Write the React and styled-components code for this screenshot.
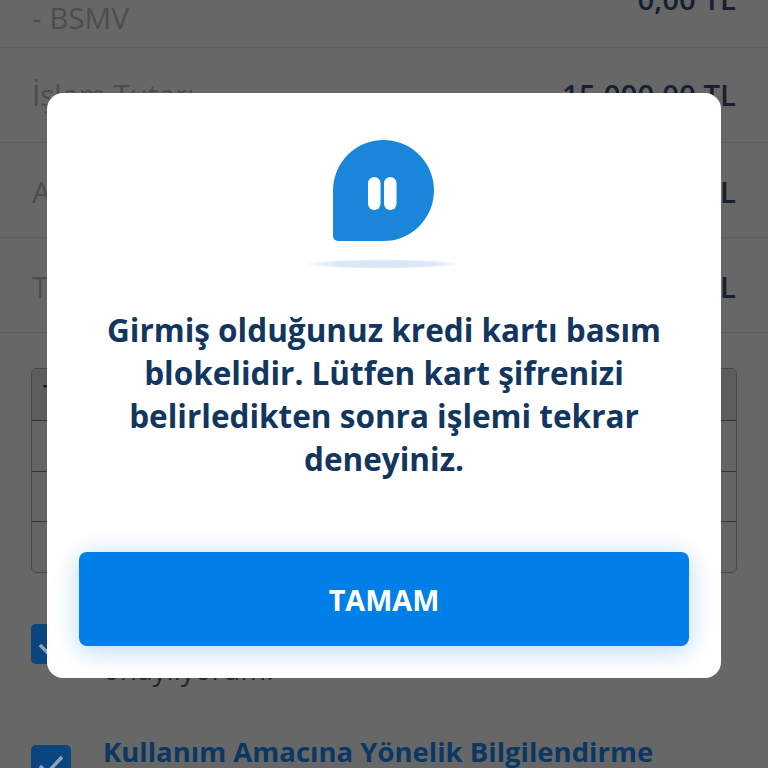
import React from "react";
import styled, { createGlobalStyle } from "styled-components";

const GlobalStyle = createGlobalStyle`
  html, body {
    margin: 0;
    padding: 0;
    background: #676767;
    font-family: "Open Sans", "Noto Sans", sans-serif;
  }
`;

// the page behind the dialog is already in its dimmed colours
const Page = styled.div`
  position: relative;
  width: 768px;
  height: 768px;
  overflow: hidden;
  background: #676767;
`;

const Summary = styled.div`
  margin-top: -47px;
`;

const Row = styled.div`
  box-sizing: border-box;
  height: 95px;
  padding: ${(p) => p.$pad}px 32px 0;
  border-bottom: 1px solid #5e5e5e;
  display: flex;
  justify-content: space-between;
  align-items: flex-start;
`;

const Label = styled.span`
  font-size: 29.6px;
  line-height: 38px;
  color: #4a4e53;
  padding-top: ${(p) => (p.$indent ? "19px" : "0")};
`;

const Value = styled.span`
  font-size: 29.4px;
  font-weight: 600;
  line-height: 38px;
  color: #181f30;
`;

const Table = styled.div`
  margin: 35px 31px 0;
  height: 205px;
  box-sizing: border-box;
  border: 1px solid #474747;
  border-radius: 6px;
  display: grid;
  grid-template-rows: repeat(4, 1fr);
  overflow: hidden;
`;

const TableRow = styled.div`
  background: ${(p) => (p.$head ? "#5d5d5d" : "#646464")};
  border-top: ${(p) => (p.$head ? "0" : "1px solid #363636")};
  padding: 6px 0 0 11px;
  font-size: 26px;
  font-weight: 600;
  line-height: 36px;
  color: #1a1a1a;
`;

const Consents = styled.div`
  margin: 51px 31px 0;
  display: flex;
  flex-direction: column;
  gap: 59px;
`;

const Consent = styled.div`
  display: flex;
  gap: 32px;
  align-items: flex-start;
`;

const Check = styled.span`
  flex: none;
  width: 40px;
  height: 40px;
  border-radius: 5px;
  background: #0a4580;
  display: flex;
  align-items: center;
  justify-content: center;
`;

const ConsentText = styled.span`
  font-size: 28px;
  line-height: 34px;
  color: #23282f;
  padding-top: 28px;
`;

const ConsentTitle = styled.span`
  margin-top: -6px;
  font-size: 27.5px;
  font-weight: 700;
  line-height: 26px;
  color: #0b3763;
  white-space: nowrap;
`;

const DialogLayer = styled.div`
  position: absolute;
  inset: 0;
  display: flex;
  justify-content: center;
  align-items: flex-start;
  padding-top: 93px;
  box-sizing: border-box;
`;

const Modal = styled.div`
  width: 674px;
  height: 585px;
  box-sizing: border-box;
  background: #fff;
  border-radius: 16px;
  padding: 47px 32px 32px;
  display: flex;
  flex-direction: column;
  align-items: center;
`;

const IconWrap = styled.div`
  width: 101px;
  height: 101px;
  margin-right: 1px;
`;

const Shadow = styled.div`
  width: 160px;
  height: 10px;
  margin: 18px 2px 0 0;
  border-radius: 50%;
  background: radial-gradient(ellipse closest-side, #d6e7f6 0%, #d9e8f6 62%, rgba(226, 238, 249, 0) 100%);
`;

const Message = styled.p`
  margin: 39px -8px 0;
  align-self: stretch;
  font-size: 31.5px;
  font-weight: 700;
  line-height: 43px;
  text-align: center;
  color: #12365e;
`;

const OkButton = styled.button`
  margin-top: auto;
  width: 100%;
  height: 94px;
  border: 0;
  border-radius: 8px;
  background: #007fe8;
  box-shadow: 0 4px 26px rgba(0, 127, 232, 0.3);
  color: #fff;
  font-family: inherit;
  font-size: 28.8px;
  font-weight: 700;
`;

const Tick = () => (
  <svg width="26" height="22" viewBox="0 0 26 22" fill="none">
    <path d="M2 12l7 7L24 3" stroke="#8fa3b8" strokeWidth="3.5" />
  </svg>
);

const PauseIcon = () => (
  <svg width="101" height="101" viewBox="0 0 101 101">
    <path
      d="M50.5 0a50.5 50.5 0 0 1 0 101H5a5 5 0 0 1-5-5V50.5A50.5 50.5 0 0 1 50.5 0z"
      fill="#1a86d9"
    />
    <rect x="35" y="37" width="12.5" height="33" rx="6.25" fill="#fff" />
    <rect x="51" y="37" width="12.5" height="33" rx="6.25" fill="#fff" />
  </svg>
);

export default function App() {
  return (
    <>
      <GlobalStyle />
      <Page>
        <Summary>
          <Row $pad={27}>
            <Label $indent>- BSMV</Label>
            <Value>0,00 TL</Value>
          </Row>
          <Row $pad={28}>
            <Label>İşlem Tutarı</Label>
            <Value>15.000,00 TL</Value>
          </Row>
          <Row $pad={30}>
            <Label>A</Label>
            <Value>TL</Value>
          </Row>
          <Row $pad={30}>
            <Label>T</Label>
            <Value>TL</Value>
          </Row>
        </Summary>
        <Table>
          <TableRow $head>T</TableRow>
          <TableRow />
          <TableRow />
          <TableRow />
        </Table>
        <Consents>
          <Consent>
            <Check>
              <Tick />
            </Check>
            <ConsentText>onaylıyorum.</ConsentText>
          </Consent>
          <Consent>
            <Check>
              <Tick />
            </Check>
            <ConsentTitle>Kullanım Amacına Yönelik Bilgilendirme</ConsentTitle>
          </Consent>
        </Consents>
        <DialogLayer>
          <Modal>
            <IconWrap>
              <PauseIcon />
            </IconWrap>
            <Shadow />
            <Message>
              Girmiş olduğunuz kredi kartı basım
              <br />
              blokelidir. Lütfen kart şifrenizi
              <br />
              belirledikten sonra işlemi tekrar
              <br />
              deneyiniz.
            </Message>
            <OkButton>TAMAM</OkButton>
          </Modal>
        </DialogLayer>
      </Page>
    </>
  );
}
